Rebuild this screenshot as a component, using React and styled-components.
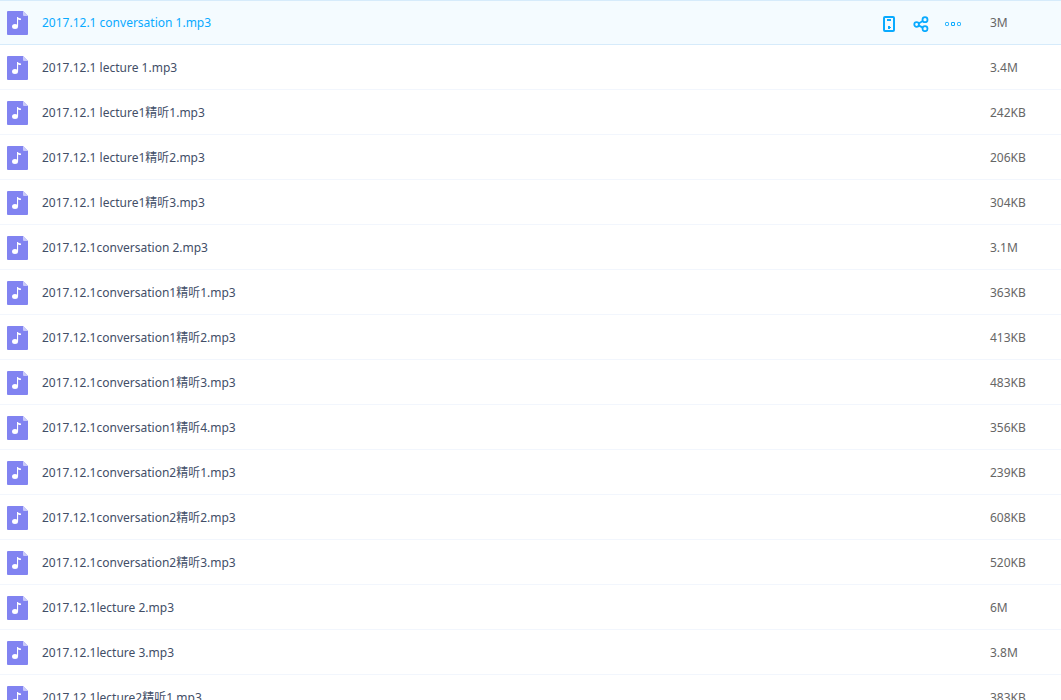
import styled, { createGlobalStyle } from "styled-components";

const files = [
  { name: "2017.12.1 conversation 1.mp3", size: "3M", active: true },
  { name: "2017.12.1 lecture 1.mp3", size: "3.4M" },
  { name: "2017.12.1 lecture1精听1.mp3", size: "242KB" },
  { name: "2017.12.1 lecture1精听2.mp3", size: "206KB" },
  { name: "2017.12.1 lecture1精听3.mp3", size: "304KB" },
  { name: "2017.12.1conversation 2.mp3", size: "3.1M" },
  { name: "2017.12.1conversation1精听1.mp3", size: "363KB" },
  { name: "2017.12.1conversation1精听2.mp3", size: "413KB" },
  { name: "2017.12.1conversation1精听3.mp3", size: "483KB" },
  { name: "2017.12.1conversation1精听4.mp3", size: "356KB" },
  { name: "2017.12.1conversation2精听1.mp3", size: "239KB" },
  { name: "2017.12.1conversation2精听2.mp3", size: "608KB" },
  { name: "2017.12.1conversation2精听3.mp3", size: "520KB" },
  { name: "2017.12.1lecture 2.mp3", size: "6M" },
  { name: "2017.12.1lecture 3.mp3", size: "3.8M" },
  { name: "2017.12.1lecture2精听1.mp3", size: "383KB" },
];

const MusicIcon = () => (
  <FileSvg viewBox="0 0 21 24" aria-hidden="true">
    <path d="M1 0h15l5 5v18a1 1 0 0 1-1 1H1a1 1 0 0 1-1-1V1a1 1 0 0 1 1-1z" fill="#8183f1" />
    <path d="M16 0l5 5h-4a1 1 0 0 1-1-1z" fill="#c9caf9" />
    <ellipse cx="8" cy="15.6" rx="3" ry="2.5" fill="#fff" />
    <path d="M10 6h1c.3 1 1.3 1.4 3 1.5v1.6c-1.2 0-2.2-.2-2.900-.7V15.6H10z" fill="#fff" />
  </FileSvg>
);

const PhoneIcon = () => (
  <ActionSvg viewBox="0 0 16 16" aria-hidden="true">
    <rect x="3" y="1" width="10" height="14" rx="1" fill="none" stroke="currentColor" strokeWidth="2" />
    <path d="M6 3h4v2H6zM7 10h2v1h1v1H9v1H7z" fill="currentColor" />
  </ActionSvg>
);

const ShareIcon = () => (
  <ActionSvg viewBox="0 0 16 16" aria-hidden="true">
    <g fill="none" stroke="currentColor" strokeWidth="1.8">
      <circle cx="3.6" cy="8.5" r="2.3" />
      <circle cx="12" cy="3.7" r="2.5" />
      <circle cx="12" cy="12.7" r="2.5" />
      <path d="M5.600 7.600l4.200-2.600M5.600 9.400l4.200 2.200" />
    </g>
  </ActionSvg>
);

const MoreIcon = () => (
  <ActionSvg viewBox="0 0 16 16" aria-hidden="true">
    <g fill="none" stroke="currentColor" strokeWidth="1">
      <rect x="0.5" y="6.5" width="3" height="3" rx="0.8" />
      <rect x="6.5" y="6.5" width="3" height="3" rx="0.2" />
      <rect x="12.5" y="6.5" width="3" height="3" rx="0.8" />
    </g>
  </ActionSvg>
);

const FileRow = ({ file }) => (
  <Row $active={file.active}>
    <NameCell>
      <NameWrap>
        <MusicIcon />
        <FileLink href="#" $active={file.active}>
          {file.name}
        </FileLink>
        {file.active && (
          <Actions>
            <ActionButton type="button" aria-label="发送到设备">
              <PhoneIcon />
            </ActionButton>
            <ActionButton type="button" aria-label="分享">
              <ShareIcon />
            </ActionButton>
            <ActionButton type="button" aria-label="更多">
              <MoreIcon />
            </ActionButton>
          </Actions>
        )}
      </NameWrap>
    </NameCell>
    <SizeCell>{file.size}</SizeCell>
  </Row>
);

const App = () => {
  return (
    <>
      <GlobalStyle />
      <ListContainer>
        <FileTable>
          <tbody>
            {files.map((file) => (
              <FileRow key={file.name} file={file} />
            ))}
          </tbody>
        </FileTable>
      </ListContainer>
    </>
  );
};
export default App;

const GlobalStyle = createGlobalStyle`
  * {
    box-sizing: border-box;
  }
  body {
    margin: 0;
    background: #fff;
    font-family: "Noto Sans", "Noto Sans CJK SC", sans-serif;
    font-size: 12px;
    line-height: 20px;
  }
`;
const ListContainer = styled.main`
  height: 100vh;
  overflow-y: auto;
  scrollbar-width: none;
`;
const FileTable = styled.table`
  width: 100%;
  border-spacing: 0;
`;
const Row = styled.tr`
  background: ${({ $active }) => ($active ? "#f4fbff" : "#fff")};
  td {
    height: 45px;
    padding: 2px 0 0;
    border-bottom: 1px solid ${({ $active }) => ($active ? "#d6ebfb" : "#f2f6fd")};
    box-shadow: ${({ $active }) => ($active ? "inset 0 1px #d6ebfb" : "none")};
  }
`;
const NameCell = styled.td``;
const NameWrap = styled.div`
  display: flex;
  align-items: center;
  height: 42px;
  padding: 0 29px 0 7px;
`;
const FileLink = styled.a`
  margin-left: 14px;
  color: ${({ $active }) => ($active ? "#09aaff" : "#424e67")};
  text-decoration: none;
  white-space: nowrap;
`;
const SizeCell = styled.td`
  width: 71px;
  color: #666;
`;
const Actions = styled.div`
  display: flex;
  gap: 16px;
  margin-left: auto;
  padding-top: 2px;
`;
const ActionButton = styled.button`
  display: flex;
  padding: 0;
  border: none;
  background: transparent;
  color: #09aaff;
  cursor: pointer;
`;
const FileSvg = styled.svg`
  flex: none;
  width: 21px;
  height: 24px;
`;
const ActionSvg = styled.svg`
  width: 16px;
  height: 16px;
`;
